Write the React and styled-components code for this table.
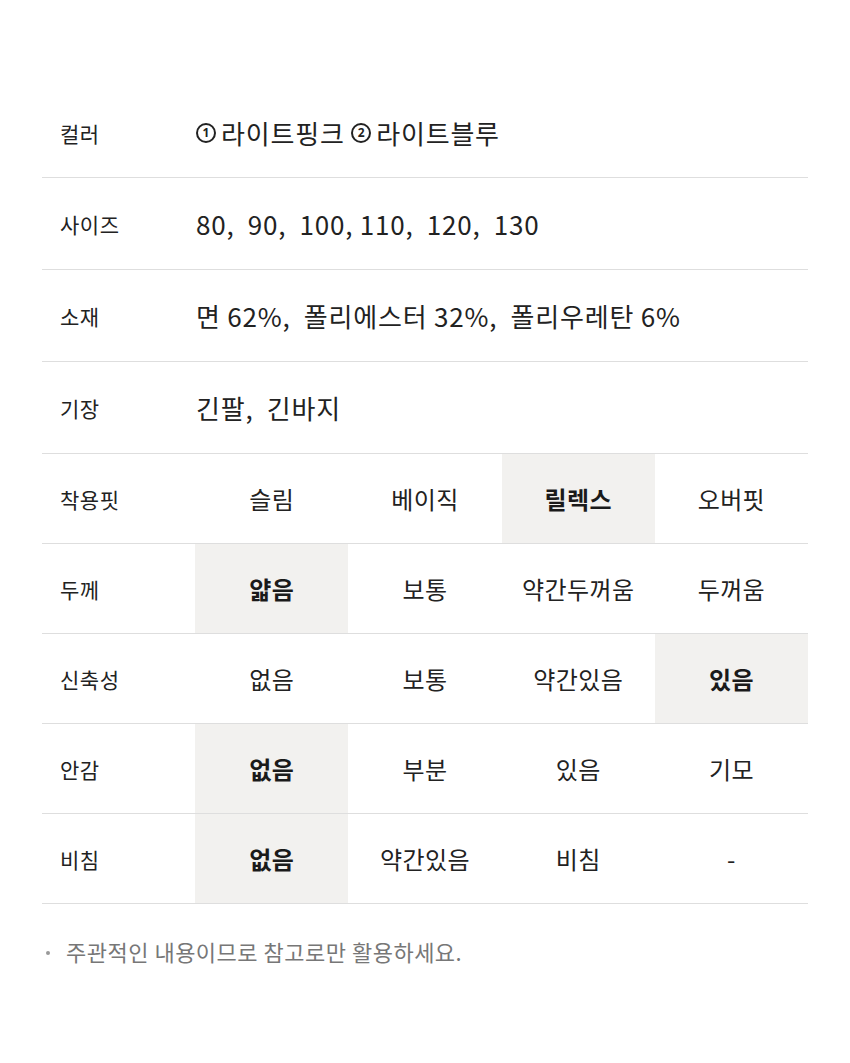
import React from "react";
import styled, { createGlobalStyle } from "styled-components";

const Global = createGlobalStyle`
  html, body { margin: 0; padding: 0; background: #fff; }
  body { font-family: "Noto Sans CJK KR", "Noto Sans", sans-serif; color: #222; }
`;

const Page = styled.div`
  padding: 88px 42px 60px;
`;

const Table = styled.div`
  display: flex;
  flex-direction: column;
`;

const InfoRow = styled.div`
  display: grid;
  grid-template-columns: 153px 1fr;
  align-items: center;
  height: 92px;
  box-sizing: border-box;
  border-bottom: 1px solid #dedede;
  &:first-child { height: 90px; }
`;

const Label = styled.div`
  padding-left: 18px;
  font-size: 21px;
  color: #222;
  letter-spacing: 0.5px;
`;

const Value = styled.div`
  display: flex;
  align-items: center;
  font-size: 26px;
  color: #222;
  white-space: pre;
  padding-left: 1px;
  letter-spacing: 0.8px;
`;

const Circled = styled.span`
  display: inline-flex;
  align-items: center;
  justify-content: center;
  box-sizing: border-box;
  width: 20px;
  height: 20px;
  margin: 1px 5px 0 0;
  border: 2px solid #222;
  border-radius: 50%;
  font-family: "Noto Sans", sans-serif;
  font-size: 12px;
  font-weight: 700;
  letter-spacing: 0;
  line-height: 1;
`;

const GridRow = styled.div`
  display: grid;
  grid-template-columns: repeat(5, 1fr);
  height: 90px;
  box-sizing: border-box;
  border-bottom: 1px solid #dedede;
`;

const GridLabel = styled(Label)`
  display: flex;
  align-items: center;
`;

const Cell = styled.div`
  display: flex;
  align-items: center;
  justify-content: center;
  font-size: 24px;
  letter-spacing: 0.4px;
  background: ${(p) => (p.$on ? "#f2f1ef" : "transparent")};
  font-weight: ${(p) => (p.$on ? 700 : 400)};
  color: ${(p) => (p.$on ? "#1a1a1a" : "#222")};
`;

const Note = styled.div`
  display: flex;
  align-items: center;
  margin-top: 31px;
  font-size: 22px;
  letter-spacing: 0.5px;
  color: #777;
  gap: 16px;
  padding-left: 4px;
`;

const Dot = styled.span`
  width: 4px;
  height: 4px;
  margin-top: 3px;
  border-radius: 50%;
  background: #999;
  flex: none;
`;

const info = [
  [
    "컬러",
    <>
      <Circled>1</Circled>라이트핑크 <Circled>2</Circled>라이트블루
    </>,
  ],
  ["사이즈", "80,  90,  100, 110,  120,  130"],
  ["소재", "면 62%,  폴리에스터 32%,  폴리우레탄 6%"],
  ["기장", "긴팔,  긴바지"],
];

const grid = [
  ["착용핏", ["슬림", "베이직", "릴렉스", "오버핏"], 2],
  ["두께", ["얇음", "보통", "약간두꺼움", "두꺼움"], 0],
  ["신축성", ["없음", "보통", "약간있음", "있음"], 3],
  ["안감", ["없음", "부분", "있음", "기모"], 0],
  ["비침", ["없음", "약간있음", "비침", "-"], 0],
];

export default function App() {
  return (
    <Page>
      <Global />
      <Table>
        {info.map(([l, v]) => (
          <InfoRow key={l}>
            <Label>{l}</Label>
            <Value>{v}</Value>
          </InfoRow>
        ))}
        {grid.map(([l, opts, sel]) => (
          <GridRow key={l}>
            <GridLabel>{l}</GridLabel>
            {opts.map((o, i) => (
              <Cell key={i} $on={i === sel}>{o}</Cell>
            ))}
          </GridRow>
        ))}
      </Table>
      <Note>
        <Dot />
        주관적인 내용이므로 참고로만 활용하세요.
      </Note>
    </Page>
  );
}
